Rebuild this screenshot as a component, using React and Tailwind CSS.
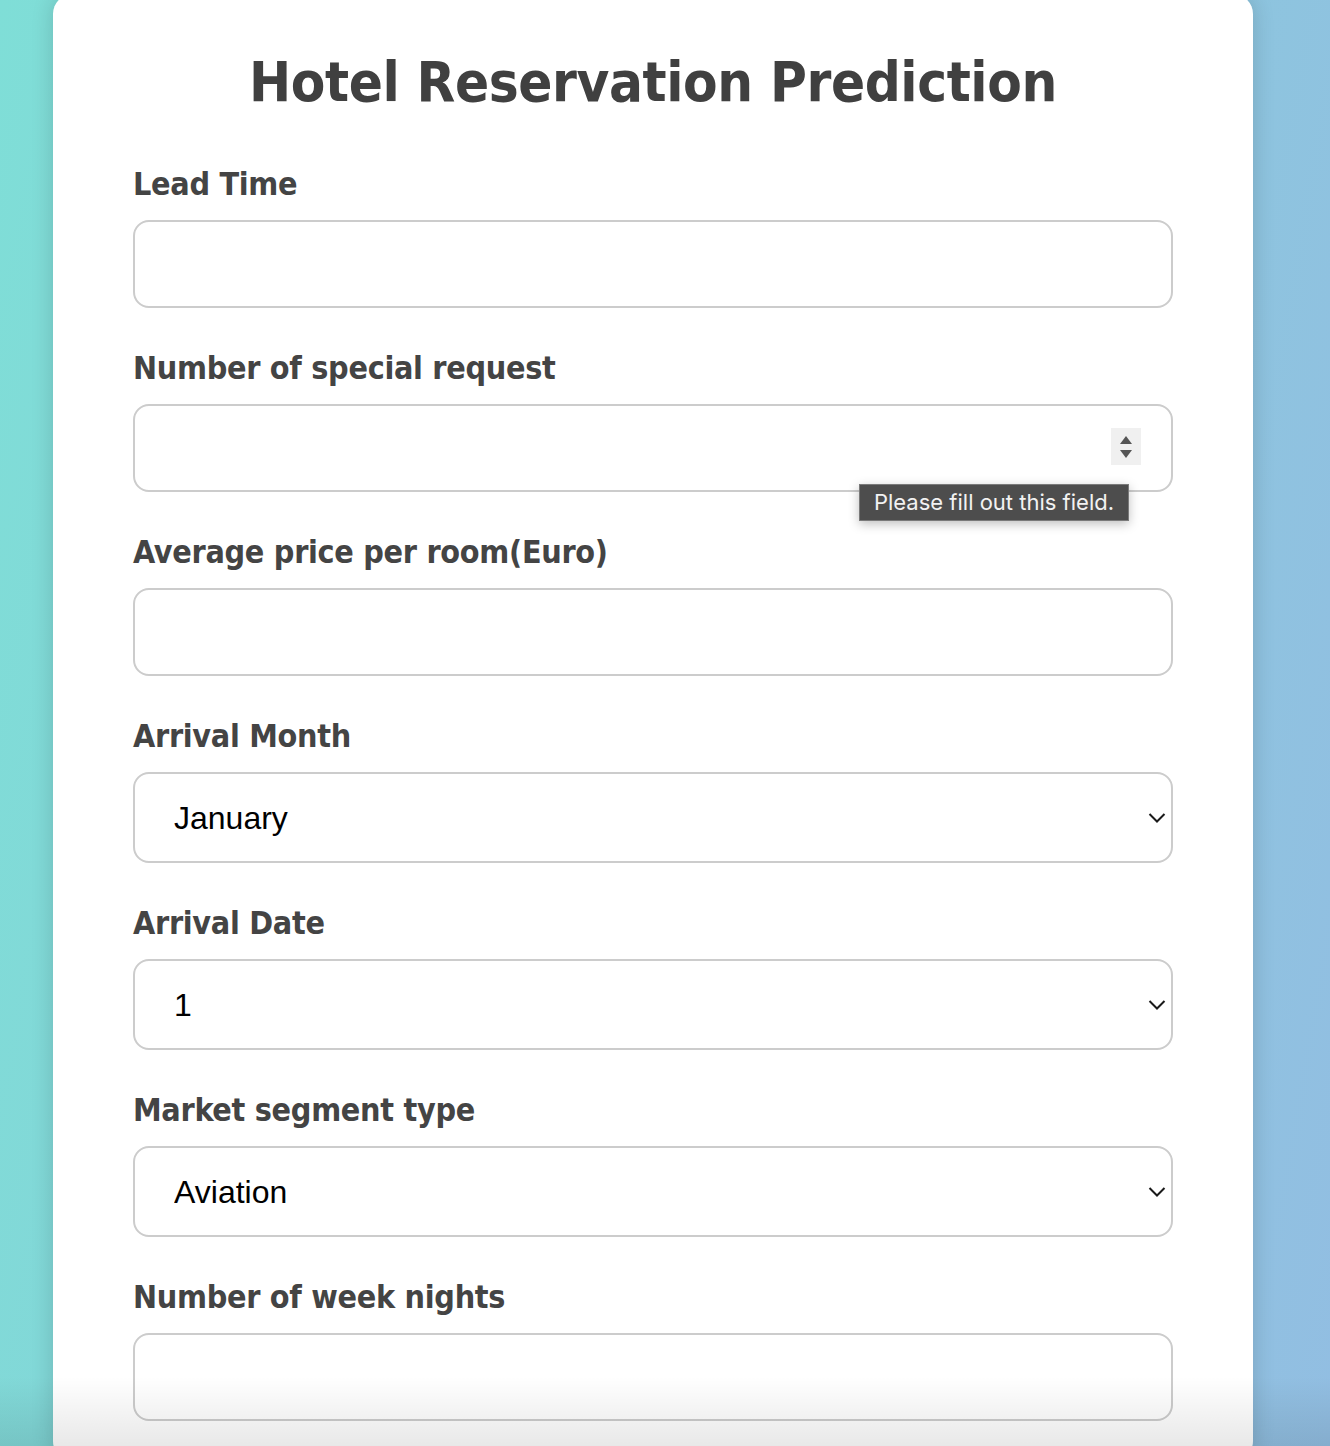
import { useState } from "react";

const MONTHS = ["January", "February", "March", "April", "May", "June", "July", "August", "September", "October", "November", "December"];
const SEGMENTS = ["Aviation", "Complementary", "Corporate", "Offline", "Online"];

const headFont = { fontFamily: "'DejaVu Sans Condensed', 'DejaVu Sans', sans-serif", fontStretch: "condensed" };

const inputCls = "block w-full border-2 border-[#cccccc] rounded-[16px] bg-transparent outline-none text-black text-[32px] px-[39px] font-['Liberation_Sans',Arial,sans-serif]";

const Label = ({ children }) => (
  <label className="block text-[32px] leading-[37px] font-bold text-[#444444] mb-[17px] tracking-[-0.3px]" style={headFont}>
    {children}
  </label>
);

const Chevron = () => (
  <svg className="absolute right-[7px] top-1/2 -translate-y-1/2 pointer-events-none" width="18" height="11" viewBox="0 0 18 11" fill="none">
    <path d="M1.5 1.5 L9 9 L16.5 1.5" stroke="#1a1a1a" strokeWidth="2" />
  </svg>
);

const SelectField = ({ label, options, value, onChange }) => (
  <div className="mb-[42px]">
    <Label>{label}</Label>
    <div className="relative">
      <select value={value} onChange={e => onChange(e.target.value)} className={`${inputCls} h-[91px] appearance-none`}>
        {options.map(o => <option key={o} value={o}>{o}</option>)}
      </select>
      <Chevron />
    </div>
  </div>
);

export default function App() {
  const [month, setMonth] = useState("January");
  const [date, setDate] = useState("1");
  const [segment, setSegment] = useState("Aviation");

  return (
    <div className="relative h-[1446px] overflow-hidden bg-[linear-gradient(100deg,#7fded7_0%,#86cfd9_45%,#92bee2_100%)]">
      <div className="ml-[53px] w-[1200px] -mt-[6px] rounded-[20px] bg-white shadow-[0_0_22px_rgba(0,0,0,0.16)] px-20 pt-[60px] pb-10">
        <h1 className="text-center text-[56px] leading-[56px] font-bold text-[#404040] mb-[56px] tracking-[-0.4px]" style={headFont}>
          Hotel Reservation Prediction
        </h1>

        {/* Lead time */}
        <div className="mb-[42px]">
          <Label>Lead Time</Label>
          <input type="text" className={`${inputCls} h-[88px]`} />
        </div>

        {/* Special requests, with the browser's validation bubble */}
        <div className="mb-[42px]">
          <Label>Number of special request</Label>
          <div className="relative">
            <input type="text" className={`${inputCls} h-[88px]`} />
            <div className="absolute left-[978px] top-[24px] w-[30px] h-[37px] bg-[#f0f0f0] flex flex-col items-center justify-center gap-[6px]">
              <svg width="12" height="8" viewBox="0 0 12 8"><path d="M6 0 L12 8 L0 8 Z" fill="#555" /></svg>
              <svg width="12" height="8" viewBox="0 0 12 8"><path d="M0 0 L12 0 L6 8 Z" fill="#555" /></svg>
            </div>
            <div className="absolute left-[726px] top-[80px] h-[37px] w-[270px] bg-[#4d4d4d] border border-[#7a7a7a] shadow-[0_3px_10px_rgba(0,0,0,0.25)] flex items-center justify-center text-[22px] text-[#f2f2f2] font-['Inter',sans-serif] z-10">
              Please fill out this field.
            </div>
          </div>
        </div>

        <div className="mb-[42px]">
          <Label>Average price per room(Euro)</Label>
          <input type="text" className={`${inputCls} h-[88px]`} />
        </div>

        <SelectField label="Arrival Month" options={MONTHS} value={month} onChange={setMonth} />
        <SelectField label="Arrival Date" options={Array.from({ length: 31 }, (_, i) => String(i + 1))} value={date} onChange={setDate} />
        <SelectField label="Market segment type" options={SEGMENTS} value={segment} onChange={setSegment} />

        <div>
          <Label>Number of week nights</Label>
          <input type="text" className={`${inputCls} h-[88px]`} />
        </div>
      </div>

      {/* shade along the bottom edge of the window */}
      <div className="pointer-events-none absolute inset-x-0 bottom-0 h-[70px] bg-gradient-to-t from-black/[0.09] to-transparent" />
    </div>
  );
}
